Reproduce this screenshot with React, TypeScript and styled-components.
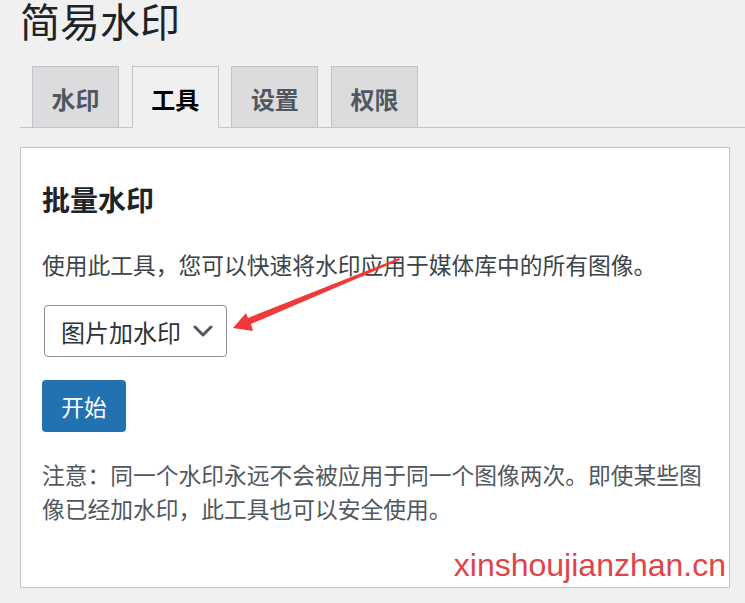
import React from "react";
import styled, { createGlobalStyle } from "styled-components";

const Global = createGlobalStyle`
  html, body { margin: 0; padding: 0; background: #f0f0f1; }
  body {
    font-family: "Noto Sans CJK SC", "Noto Sans", sans-serif;
    color: #3c434a;
    overflow: hidden;
  }
`;

const Page = styled.div`
  position: relative;
  width: 745px;
  height: 603px;
  padding-left: 20px;
  box-sizing: border-box;
  overflow: hidden;
`;

const Title = styled.h1`
  margin: 0;
  font-size: 40px;
  line-height: 40px;
  font-weight: 400;
  color: #1d2327;
`;

const TabBar = styled.nav`
  display: flex;
  align-items: flex-end;
  gap: 12.7px;
  margin-top: 26px;
  padding-left: 12px;
  border-bottom: 1px solid #c3c4c7;
  height: 61px;
`;

const Tab = styled.div<{ $active?: boolean }>`
  box-sizing: border-box;
  width: 87px;
  height: ${(p) => (p.$active ? "62px" : "61px")};
  margin-bottom: ${(p) => (p.$active ? "-1px" : "0")};
  display: flex;
  align-items: center;
  justify-content: center;
  border: 1px solid #c3c4c7;
  border-bottom: ${(p) => (p.$active ? "1px solid #f0f0f1" : "none")};
  background: ${(p) => (p.$active ? "#f0f0f1" : "#dcdcde")};
  color: ${(p) => (p.$active ? "#000" : "#50575e")};
  font-size: 24px;
  font-weight: 700;
  padding-top: 2px;
`;

const Card = styled.section`
  position: relative;
  box-sizing: border-box;
  margin-top: 19px;
  width: 710px;
  height: 441px;
  background: #fff;
  border: 1px solid #c3c4c7;
  padding: 30px 22px 0 21px;
`;

const Heading = styled.h2`
  margin: 0;
  font-size: 28px;
  line-height: 42px;
  font-weight: 700;
  color: #1d2327;
`;

const Text = styled.p<{ $muted?: boolean }>`
  margin: 0;
  font-size: 22.75px;
  line-height: 34px;
  color: ${(p) => (p.$muted ? "#50575e" : "#3c434a")};
`;

const Intro = styled(Text)`
  margin-top: 28px;
`;

const Note = styled(Text)`
  margin-top: 26px;
  width: 665px;
`;

const Select = styled.div`
  box-sizing: border-box;
  margin-top: 23px;
  margin-left: 2px;
  width: 183px;
  height: 52px;
  display: flex;
  align-items: center;
  gap: 12px;
  padding-left: 16px;
  border: 1px solid #8c8f94;
  border-radius: 4px;
  color: #2c3338;
  font-size: 24px;
`;

const Button = styled.button`
  box-sizing: border-box;
  margin-top: 23px;
  width: 84px;
  height: 52px;
  border: none;
  border-radius: 4px;
  background: #2271b1;
  color: #fff;
  font-family: "Noto Sans CJK SC", "Noto Sans", sans-serif;
  font-size: 22.75px;
  padding: 0;
  display: block;
`;

const Watermark = styled.div`
  position: absolute;
  right: 3px;
  bottom: 4px;
  font-family: "Liberation Sans", Arial, sans-serif;
  font-size: 32px;
  line-height: 36px;
  color: #e0444a;
`;

const Arrow = styled.svg`
  position: absolute;
  left: 0;
  top: 0;
  pointer-events: none;
`;

export default function App() {
  return (
    <>
      <Global />
      <Page>
        <Title>简易水印</Title>
        <TabBar>
          <Tab>水印</Tab>
          <Tab $active>工具</Tab>
          <Tab>设置</Tab>
          <Tab>权限</Tab>
        </TabBar>
        <Card>
          <Heading>批量水印</Heading>
          <Intro>使用此工具，您可以快速将水印应用于媒体库中的所有图像。</Intro>
          <Select>
            <span>图片加水印</span>
            <svg width="20" height="12" viewBox="0 0 20 12">
              <polyline
                points="2,2 10,10 18,2"
                fill="none"
                stroke="#50575e"
                strokeWidth="3"
                strokeLinecap="round"
                strokeLinejoin="round"
              />
            </svg>
          </Select>
          <Button>开始</Button>
          <Note $muted>
            注意：同一个水印永远不会被应用于同一个图像两次。即使某些图像已经加水印，此工具也可以安全使用。
          </Note>
          <Watermark>xinshoujianzhan.cn</Watermark>
        </Card>
        <Arrow width="745" height="603" viewBox="0 0 745 603">
          <polygon
            points="399,258 400,260 251,324 253,331 233,328 246,313 248,318"
            fill="#f03a3a"
          />
        </Arrow>
      </Page>
    </>
  );
}
